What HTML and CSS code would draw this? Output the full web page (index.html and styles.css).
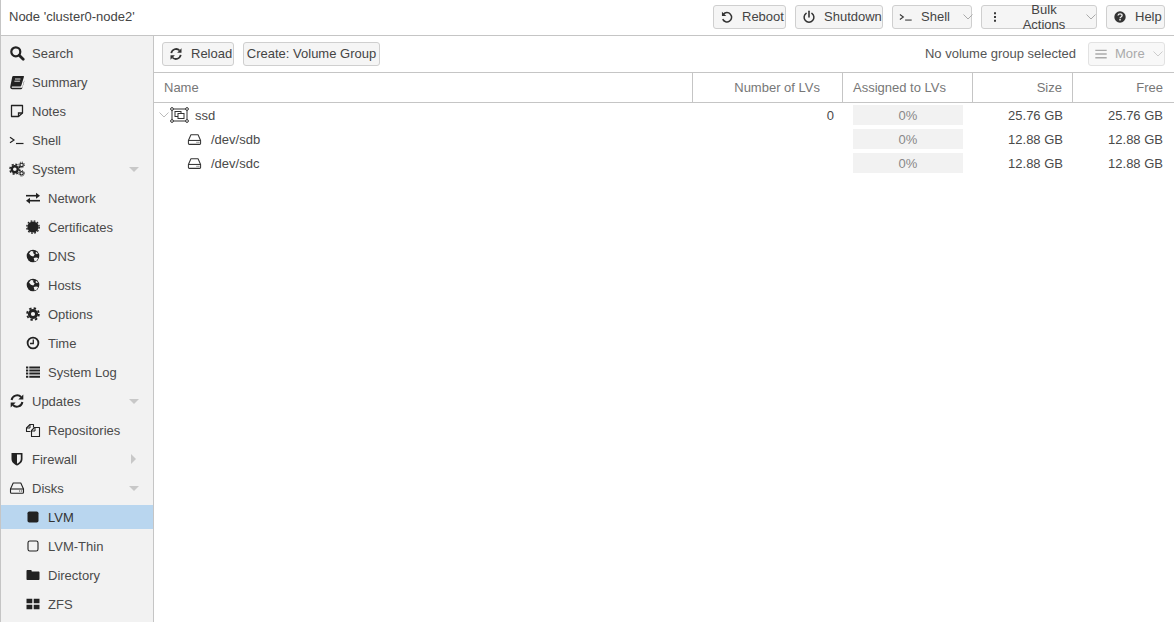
FILE: index.html
```html
<!DOCTYPE html>
<html lang="en">
<head>
<meta charset="utf-8">
<title>Node cluster0-node2</title>
<link rel="stylesheet" href="styles.css">
</head>
<body>
<svg class="defs" width="0" height="0" aria-hidden="true">
  <defs>
    <symbol id="i-search" viewBox="0 0 16 16"><circle cx="6.8" cy="6.8" r="4.5" fill="none" stroke="currentColor" stroke-width="2.2"/><path d="M10.2 10.2l4 4" stroke="currentColor" stroke-width="2.8" stroke-linecap="round"/></symbol>
    <symbol id="i-book" viewBox="0 0 16 16"><path d="M4.4 2h9.8c.6 0 .9.4.7 1l-2.5 8.3c-.2.8-.8 1.2-1.5 1.2H3.4c-.5 0-.8.3-.7.7.1.4.4.6.9.6h8.9c.4 0 .6-.2.8-.6l2-7-.1 1.6-2 6.4c-.2.6-.7 1-1.3 1H3.3C2 15.200 1 14 1.200 12.700L3.200 3c.1-.6.6-1 1.200-1z" fill="currentColor"/><path d="M6 5h5.500M5.400 7.200h5.500" stroke="#f2f2f2" stroke-width=".9"/></symbol>
    <symbol id="i-note" viewBox="0 0 16 16"><path d="M2.500 2.500h11v7.500l-4 3.500h-7z" fill="none" stroke="currentColor" stroke-width="1.300" stroke-linejoin="round"/><path d="M9.500 13.500v-3.500h4" fill="none" stroke="currentColor" stroke-width="1.300"/></symbol>
    <symbol id="i-term" viewBox="0 0 16 16"><path d="M1 5.200l4 2.800-4 2.800" fill="none" stroke="currentColor" stroke-width="1.200"/><path d="M7 11.500h7.500" stroke="currentColor" stroke-width="1.200"/></symbol>
    <symbol id="i-cogs" viewBox="0 0 16 16"><circle cx="5.800" cy="8.200" r="3" fill="none" stroke="currentColor" stroke-width="2.400"/><circle cx="5.800" cy="8.200" r="4.900" fill="none" stroke="currentColor" stroke-width="1.500" stroke-dasharray="2.100 1.750"/><circle cx="12.600" cy="3.900" r="1.700" fill="none" stroke="currentColor" stroke-width="1.100"/><circle cx="12.600" cy="3.900" r="2.800" fill="none" stroke="currentColor" stroke-width="1" stroke-dasharray="1.100 1.100"/><circle cx="12.600" cy="12.300" r="1.700" fill="none" stroke="currentColor" stroke-width="1.100"/><circle cx="12.600" cy="12.300" r="2.800" fill="none" stroke="currentColor" stroke-width="1" stroke-dasharray="1.100 1.100"/></symbol>
    <symbol id="i-exchange" viewBox="0 0 16 16"><path d="M1 5.700h11" stroke="currentColor" stroke-width="1.600"/><path d="M11 2.700l4 3-4 3z" fill="currentColor"/><path d="M15 10.700H4" stroke="currentColor" stroke-width="1.600"/><path d="M5 7.700l-4 3 4 3z" fill="currentColor"/></symbol>
    <symbol id="i-cert" viewBox="0 0 16 16"><circle cx="8" cy="8" r="5.600" fill="currentColor"/><circle cx="8" cy="8" r="6.200" fill="none" stroke="currentColor" stroke-width="1.400" stroke-dasharray="1.700 1.550"/></symbol>
    <symbol id="i-globe" viewBox="0 0 16 16"><circle cx="8" cy="8" r="6.300" fill="currentColor"/><path d="M4 5.500l2-2.400 2.500.3-.4 1.600 1.600 1.600-1.400 1.800-2.400-.6zM8.700 10l2.500-.6 2 .6-1.600 2.800-2 .6zM11 3.800l2 1.500-1 .9-1.500-1z" fill="#f2f2f2"/></symbol>
    <symbol id="i-gear" viewBox="0 0 16 16"><circle cx="8" cy="8" r="3.600" fill="none" stroke="currentColor" stroke-width="3"/><circle cx="8" cy="8" r="5.900" fill="none" stroke="currentColor" stroke-width="1.800" stroke-dasharray="2.400 2.230"/></symbol>
    <symbol id="i-clock" viewBox="0 0 16 16"><circle cx="8" cy="8" r="5.400" fill="none" stroke="currentColor" stroke-width="1.800"/><path d="M8.300 4.600V8.500H5" fill="none" stroke="currentColor" stroke-width="1.300"/></symbol>
    <symbol id="i-list" viewBox="0 0 16 16"><path d="M1 3h2.300v2H1zM1 6.100h2.300v2H1zM1 9.200h2.300v2H1zM1 12.300h2.300v2H1zM4.300 3H15v2H4.300zM4.300 6.100H15v2H4.300zM4.300 9.200H15v2H4.300zM4.300 12.300H15v2H4.300z" fill="currentColor" transform="translate(0 -.6)"/></symbol>
    <symbol id="i-refresh" viewBox="0 0 16 16"><path d="M2.600 7a5.600 5.600 0 0 1 9.500-3" fill="none" stroke="currentColor" stroke-width="2"/><path d="M14.300 1.500v5h-5z" fill="currentColor"/><path d="M13.400 9a5.600 5.600 0 0 1-9.500 3" fill="none" stroke="currentColor" stroke-width="2"/><path d="M1.700 14.500v-5h5z" fill="currentColor"/></symbol>
    <symbol id="i-files" viewBox="0 0 16 16"><path d="M5.500 9.500H1.500V6l3.500-3.500H8.500v3" fill="none" stroke="currentColor" stroke-width="1.100" stroke-linejoin="round"/><path d="M5 2.500V6H1.500" fill="none" stroke="currentColor" stroke-width="1"/><path d="M6.500 14.500v-6L9.500 5.500h5v9z" fill="none" stroke="currentColor" stroke-width="1.100" stroke-linejoin="round"/><path d="M10 5.500V9H6.500" fill="none" stroke="currentColor" stroke-width="1"/></symbol>
    <symbol id="i-shield" viewBox="0 0 16 16"><path d="M3 2h10c.3 0 .5.2.5.5V8c0 3.500-3.500 5.700-5.500 6.500C6 13.700 2.500 11.500 2.500 8V2.500c0-.3.2-.5.500-.5z" fill="currentColor"/><path d="M8 3.500h3.800V8c0 2.300-2.200 3.900-3.800 4.800z" fill="#f2f2f2"/></symbol>
    <symbol id="i-hdd" viewBox="0 0 16 16"><path d="M4.200 3h7.600l2.700 6v3.200c0 .6-.4 1-1 1h-11c-.6 0-1-.4-1-1V9z" fill="none" stroke="currentColor" stroke-width="1.100" stroke-linejoin="round"/><path d="M1.500 9h13" stroke="currentColor" stroke-width="1.100"/><path d="M10.200 11h1M12.200 11h1" stroke="currentColor" stroke-width="1"/></symbol>
    <symbol id="i-square" viewBox="0 0 16 16"><rect x="2.500" y="2.500" width="11" height="11" rx="1.800" fill="currentColor"/></symbol>
    <symbol id="i-square-o" viewBox="0 0 16 16"><rect x="3" y="3" width="10" height="10" rx="1.800" fill="none" stroke="currentColor" stroke-width="1.100"/></symbol>
    <symbol id="i-folder" viewBox="0 0 16 16"><path d="M1.500 4c0-.6.4-1 1-1h3.200c.5 0 1 .4 1 1v.6h6.800c.6 0 1 .4 1 1v6.500c0 .6-.4 1-1 1h-11c-.6 0-1-.4-1-1z" fill="currentColor"/></symbol>
    <symbol id="i-th" viewBox="0 0 16 16"><path d="M1.500 2.800h5.800v4.500H1.500zM8.700 2.800h5.800v4.500H8.700zM1.500 8.700h5.800v4.500H1.500zM8.700 8.700h5.800v4.500H8.700z" fill="currentColor"/></symbol>
    <symbol id="i-undo" viewBox="0 0 16 16"><path d="M3.800 5a5.300 5.300 0 1 1-.7 5.400" fill="none" stroke="currentColor" stroke-width="1.700"/><path d="M2.200 1.900v5h5z" fill="currentColor"/></symbol>
    <symbol id="i-power" viewBox="0 0 16 16"><path d="M4.700 3.800a5.600 5.600 0 1 0 6.600 0" fill="none" stroke="currentColor" stroke-width="1.700" stroke-linecap="round"/><path d="M8 1.500v6.500" stroke="currentColor" stroke-width="1.800" stroke-linecap="round"/></symbol>
    <symbol id="i-dots" viewBox="0 0 16 16"><path d="M6.900 2.500h2.200v2.300H6.900zM6.900 6.800h2.200v2.300H6.900zM6.900 11.100h2.200v2.300H6.900z" fill="currentColor"/></symbol>
    <symbol id="i-help" viewBox="0 0 16 16"><circle cx="8" cy="8" r="6.500" fill="currentColor"/><path d="M5.700 6.300c.2-1.300 1.200-1.900 2.400-1.900 1.300 0 2.300.8 2.300 1.900 0 1.700-2.300 1.600-2.300 3" fill="none" stroke="#f2f2f2" stroke-width="1.500"/><path d="M7.200 10.300h1.700v1.600H7.200z" fill="#f2f2f2"/></symbol>
    <symbol id="i-bars" viewBox="0 0 16 16"><path d="M1.500 3h13v1.600h-13zM1.500 7.200h13v1.600h-13zM1.500 11.400h13v1.600h-13z" fill="currentColor"/></symbol>
    <symbol id="i-chev" viewBox="0 0 10 6"><path d="M.5.500L5 5 9.500.500" fill="none" stroke="currentColor" stroke-width="1"/></symbol>
    <symbol id="i-vg" viewBox="0 0 19 16"><rect x="2" y="2" width="15" height="12" fill="none" stroke="currentColor" stroke-width="1"/><rect x="5" y="4.500" width="6" height="5" fill="none" stroke="currentColor" stroke-width="1"/><rect x="8" y="6.500" width="6" height="5" fill="#fff" stroke="currentColor" stroke-width="1"/><g fill="#fff" stroke="currentColor"><circle cx="2" cy="2" r="1.400"/><circle cx="17" cy="2" r="1.400"/><circle cx="2" cy="14" r="1.400"/><circle cx="17" cy="14" r="1.400"/></g></symbol>
  </defs>
</svg>

<div class="page">
  <header class="topbar">
    <div class="title">Node 'cluster0-node2'</div>
    <div class="top-actions">
      <button class="btn btn-reboot"><svg class="ico"><use href="#i-undo"/></svg>Reboot</button>
      <button class="btn btn-shutdown"><svg class="ico"><use href="#i-power"/></svg>Shutdown</button>
      <button class="btn btn-shell"><svg class="ico"><use href="#i-term"/></svg>Shell<span class="split"></span><svg class="chev"><use href="#i-chev"/></svg></button>
      <button class="btn btn-bulk"><svg class="ico"><use href="#i-dots"/></svg>Bulk Actions<svg class="chev chev-gap"><use href="#i-chev"/></svg></button>
      <button class="btn btn-help"><svg class="ico"><use href="#i-help"/></svg>Help</button>
    </div>
  </header>

  <div class="body">
    <nav class="sidebar">
      <a class="nav"><svg class="ico"><use href="#i-search"/></svg>Search</a>
      <a class="nav"><svg class="ico"><use href="#i-book"/></svg>Summary</a>
      <a class="nav"><svg class="ico"><use href="#i-note"/></svg>Notes</a>
      <a class="nav"><svg class="ico"><use href="#i-term"/></svg>Shell</a>
      <a class="nav"><svg class="ico"><use href="#i-cogs"/></svg>System<span class="tri tri-down"></span></a>
      <a class="nav sub"><svg class="ico"><use href="#i-exchange"/></svg>Network</a>
      <a class="nav sub"><svg class="ico"><use href="#i-cert"/></svg>Certificates</a>
      <a class="nav sub"><svg class="ico"><use href="#i-globe"/></svg>DNS</a>
      <a class="nav sub"><svg class="ico"><use href="#i-globe"/></svg>Hosts</a>
      <a class="nav sub"><svg class="ico"><use href="#i-gear"/></svg>Options</a>
      <a class="nav sub"><svg class="ico"><use href="#i-clock"/></svg>Time</a>
      <a class="nav sub"><svg class="ico"><use href="#i-list"/></svg>System Log</a>
      <a class="nav"><svg class="ico"><use href="#i-refresh"/></svg>Updates<span class="tri tri-down"></span></a>
      <a class="nav sub"><svg class="ico"><use href="#i-files"/></svg>Repositories</a>
      <a class="nav"><svg class="ico"><use href="#i-shield"/></svg>Firewall<span class="tri tri-right"></span></a>
      <a class="nav"><svg class="ico"><use href="#i-hdd"/></svg>Disks<span class="tri tri-down"></span></a>
      <a class="nav sub selected"><svg class="ico"><use href="#i-square"/></svg>LVM</a>
      <a class="nav sub"><svg class="ico"><use href="#i-square-o"/></svg>LVM-Thin</a>
      <a class="nav sub"><svg class="ico"><use href="#i-folder"/></svg>Directory</a>
      <a class="nav sub"><svg class="ico"><use href="#i-th"/></svg>ZFS</a>
    </nav>

    <main class="content">
      <div class="toolbar">
        <button class="btn btn-reload"><svg class="ico"><use href="#i-refresh"/></svg>Reload</button>
        <button class="btn btn-create">Create: Volume Group</button>
        <span class="status">No volume group selected</span>
        <button class="btn btn-more" disabled><svg class="ico"><use href="#i-bars"/></svg>More<svg class="chev chev-gap"><use href="#i-chev"/></svg></button>
      </div>

      <div class="grid-head row-grid">
        <div class="hc">Name</div>
        <div class="hc right">Number of LVs</div>
        <div class="hc">Assigned to LVs</div>
        <div class="hc right">Size</div>
        <div class="hc right">Free</div>
      </div>

      <div class="row row-grid">
        <div class="cell name"><svg class="tree-chev"><use href="#i-chev"/></svg><svg class="vg"><use href="#i-vg"/></svg>ssd</div>
        <div class="cell right">0</div>
        <div class="cell"><div class="bar">0%</div></div>
        <div class="cell right">25.76 GB</div>
        <div class="cell right">25.76 GB</div>
      </div>
      <div class="row row-grid">
        <div class="cell name child"><svg class="ico"><use href="#i-hdd"/></svg>/dev/sdb</div>
        <div class="cell right"></div>
        <div class="cell"><div class="bar">0%</div></div>
        <div class="cell right">12.88 GB</div>
        <div class="cell right">12.88 GB</div>
      </div>
      <div class="row row-grid">
        <div class="cell name child"><svg class="ico"><use href="#i-hdd"/></svg>/dev/sdc</div>
        <div class="cell right"></div>
        <div class="cell"><div class="bar">0%</div></div>
        <div class="cell right">12.88 GB</div>
        <div class="cell right">12.88 GB</div>
      </div>
    </main>
  </div>
</div>
</body>
</html>
```

FILE: styles.css
```css
* { box-sizing: border-box; }
html, body { margin: 0; height: 100%; overflow: hidden; }
body {
  font-family: "Liberation Sans", Arial, sans-serif;
  font-size: 13px;
  color: #4a4a4a;
  background: #fff;
}
.defs { position: absolute; }
.page { height: 622px; display: flex; flex-direction: column; border-left: 1px solid #c5c5c5; }

.topbar {
  height: 36px;
  flex: none;
  display: flex;
  align-items: center;
  justify-content: space-between;
  padding: 0 9px 2px 8px;
  border-bottom: 1px solid #c5c5c5;
}
.title { color: #444; }
.top-actions { display: flex; gap: 9px; }

.btn {
  height: 24px;
  display: flex;
  align-items: center;
  padding: 0;
  font: inherit;
  color: #444;
  background: #f5f5f5;
  border: 1px solid #cfcfcf;
  border-radius: 3px;
}
.btn .ico { width: 14px; height: 14px; flex: none; color: #333; margin: 0 8px 0 6px; }
.btn-reboot { width: 73px; }
.btn-shutdown { width: 88px; }
.btn-shell { width: 80px; }
.btn-bulk { width: 116px; }
.btn-help { width: 59px; }
.split { width: 1px; height: 16px; background: #cfcfcf; margin-left: 8px; }
.chev { width: 10px; height: 6px; flex: none; margin-left: 5px; color: #aaa; }
.chev-gap { margin-left: 8px; }

.body { flex: 1; display: flex; min-height: 0; }

.sidebar {
  width: 153px;
  flex: none;
  background: #f2f2f2;
  border-right: 1px solid #c5c5c5;
  padding-top: 5px;
  display: flex;
  flex-direction: column;
  gap: 5px;
  overflow: hidden;
}
.nav {
  height: 24px;
  flex: none;
  position: relative;
  display: flex;
  align-items: center;
  padding-left: 8px;
  color: #4a4a4a;
}
.nav .ico { width: 16px; height: 16px; flex: none; color: #222; margin-right: 7px; }
.nav.sub { padding-left: 24px; }
.nav.selected { background: #b9d6ef; color: #333; }
.tri { position: absolute; width: 0; height: 0; }
.tri-down { left: 128px; top: 10px; border-left: 5px solid transparent; border-right: 5px solid transparent; border-top: 5px solid #c8c8c8; }
.tri-right { left: 130px; top: 7px; border-top: 5px solid transparent; border-bottom: 5px solid transparent; border-left: 5px solid #c8c8c8; }

.content { flex: 1; min-width: 0; display: flex; flex-direction: column; }

.toolbar {
  height: 37px;
  flex: none;
  display: flex;
  align-items: center;
  padding: 0 9px 1px 8px;
  border-bottom: 1px solid #c5c5c5;
}
.btn-reload { width: 72px; margin-right: 9px; }
.btn-create { width: 137px; justify-content: center; }
.status { margin-left: auto; margin-right: 12px; color: #555; }
.btn-more { width: 77px; color: #aaa; background: #f8f8f8; border-color: #e2e2e2; }
.btn-more .ico { color: #aaa; margin: 0 7px 0 5px; }
.btn-more .chev { color: #ccc; }

.row-grid { display: grid; grid-template-columns: 539px 150px 130px 100px 100px; }
.grid-head { height: 30px; flex: none; border-bottom: 1px solid #c5c5c5; color: #777; }
.hc { display: flex; align-items: center; padding: 0 10px; border-right: 1px solid #c5c5c5; }
.hc:last-child { border-right: 0; }
.hc.right { justify-content: flex-end; }
.hc:nth-child(2) { padding-right: 22px; }

.row { height: 24px; flex: none; color: #4a4a4a; }
.cell { display: flex; align-items: center; padding: 0 10px; min-width: 0; }
.cell.right { justify-content: flex-end; }
.cell:nth-child(2) { padding-right: 9px; }
.name { padding-left: 5px; }
.tree-chev { width: 10px; height: 6px; color: #bbb; margin-right: 1px; flex: none; }
.vg { width: 19px; height: 16px; color: #333; margin-right: 6px; flex: none; }
.child { padding-left: 33px; }
.child .ico { width: 15px; height: 15px; color: #333; margin-right: 9px; flex: none; }
.bar { width: 110px; height: 20px; background: #f2f2f2; color: #888; display: flex; align-items: center; justify-content: center; }
```
